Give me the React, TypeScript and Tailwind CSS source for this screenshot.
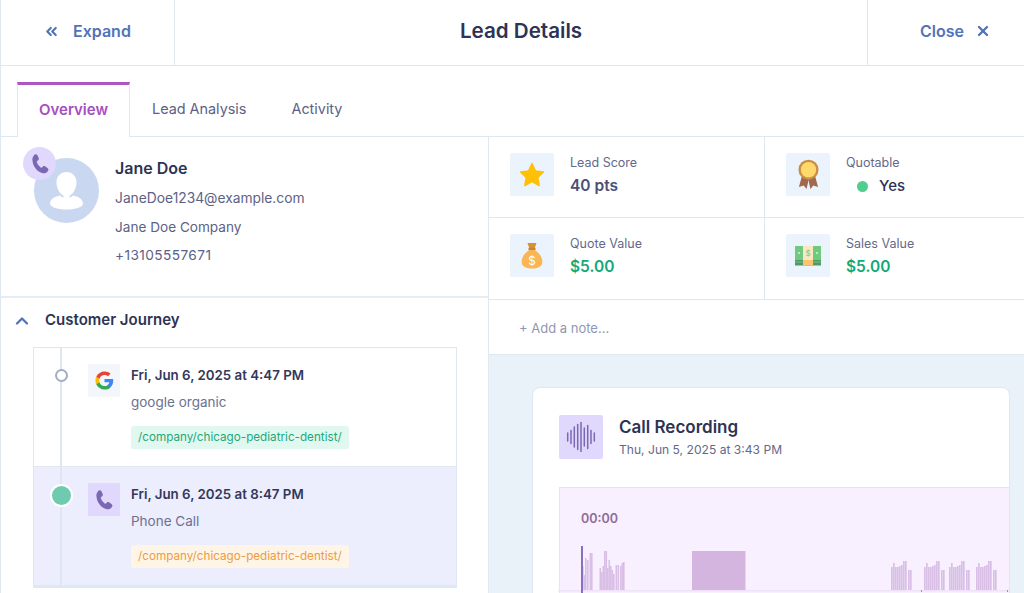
import { ChevronUp, ChevronsLeft, X } from 'lucide-react';

function PhoneIcon({ className }: { className: string }) {
  return (
    <svg viewBox="0 0 24 24" className={className} fill="#7a68b3">
      <path d="M6.2 1.6c1-.6 2.2-.3 2.8.7l1.5 3c.5 1 .3 2-.5 2.7l-1.3 1c-.3.3-.4.7-.2 1.2 1 2.500 2.300 4.200 4.300 5.600.4.300.8.200 1.200-.1l1.200-1c.8-.7 1.900-.7 2.700-.1l2.500 2c.9.7 1 2 .3 2.900l-.8.9c-1.200 1.300-3 2-4.800 1.600-6.300-1.500-10.800-7.300-11.400-14.500-.2-2 .5-3.700 1.700-4.900z" />
    </svg>
  );
}

function GoogleLogo() {
  return (
    <svg viewBox="0 0 24 24" className="w-[19px] h-[19px]">
      <path fill="#4285F4" d="M23 12.300c0-.8-.1-1.600-.2-2.300H12v4.300h6.200c-.3 1.400-1.100 2.600-2.300 3.400v2.800h3.700c2.100-2 3.400-4.900 3.400-8.200z" />
      <path fill="#34A853" d="M12 23.500c3.100 0 5.700-1 7.600-2.800l-3.700-2.800c-1 .7-2.400 1.100-3.900 1.100-3 0-5.500-2-6.400-4.700H1.700v2.900c1.900 3.800 5.800 6.300 10.300 6.300z" />
      <path fill="#FBBC05" d="M5.600 14.300c-.2-.7-.4-1.500-.4-2.300s.1-1.600.4-2.300V6.800H1.700C.9 8.400.5 10.100.5 12s.4 3.600 1.200 5.200l3.900-2.900z" />
      <path fill="#EA4335" d="M12 5c1.700 0 3.200.6 4.400 1.700l3.300-3.300C17.700 1.600 15.100.5 12 .5 7.500.5 3.600 3.100 1.700 6.800l3.900 2.900C6.500 7 9 5 12 5z" />
    </svg>
  );
}

function StarIcon() {
  return (
    <svg viewBox="0 0 26 25" className="w-[26px] h-[25px]">
      <path fill="#ffc107" stroke="#ffc107" strokeWidth="1.500" strokeLinejoin="round" d="M13 1.500l3.500 7.500 8 1-5.800 5.500 1.500 8L13 19.600 5.800 23.500l1.500-8L1.500 10l8-1z" />
    </svg>
  );
}

function RibbonIcon() {
  return (
    <svg viewBox="0 0 24 32" className="w-[23px] h-[31px]">
      <path fill="#a1674f" d="M5 18l-3 11 5-1.500L10 31l2.500-11z" />
      <path fill="#a1674f" d="M19 18l3 11-5-1.500L14 31l-2.500-11z" />
      <circle cx="12" cy="11" r="10.500" fill="#c98f45" />
      <circle cx="12" cy="11" r="8" fill="#ffd96b" />
    </svg>
  );
}

function BagIcon() {
  return (
    <svg viewBox="0 0 24 30" className="w-[22px] h-[27px]">
      <path fill="#d98f35" d="M7 1h10l-2 6h-6z" />
      <rect x="8" y="6.500" width="8" height="2.500" rx="1" fill="#c98430" />
      <path fill="#fbb654" d="M9 9h6c5 3 8.500 8 8.500 13 0 5-4 7.500-11.500 7.500S.5 27 .5 22C.5 17 4 12 9 9z" />
      <text x="12" y="25" textAnchor="middle" fontSize="13" fill="#fff" fontFamily="Inter, sans-serif">$</text>
    </svg>
  );
}

function BillsIcon() {
  return (
    <svg viewBox="0 0 26 20" className="w-[26px] h-[20px]">
      <rect x="0" y="0" width="26" height="14" fill="#6fc97f" />
      <rect x="0" y="14" width="26" height="5.500" fill="#4c9a66" />
      <rect x="0" y="15.500" width="26" height="1" fill="#7dbb8e" />
      <rect x="8" y="0" width="10" height="14" fill="#fbe7c0" />
      <rect x="8" y="14" width="10" height="5.500" fill="#fbc46d" />
      <circle cx="4" cy="7" r="1" fill="#d4f2da" />
      <circle cx="22" cy="7" r="1" fill="#d4f2da" />
      <text x="13" y="10" textAnchor="middle" fontSize="8" fill="#7cc48a" fontFamily="Inter, sans-serif">$</text>
    </svg>
  );
}

function SoundIcon() {
  // x from centre, half height
  const lines = [[-13.300, 4], [-10, 6.500], [-6.700, 10], [-3.300, 12.500], [0, 14.500], [3.300, 9], [6.700, 11.500], [10, 6.500], [13.300, 4]];
  return (
    <svg viewBox="-15 -15 30 30" className="w-[30px] h-[30px]" stroke="#7a68b3" strokeWidth="1.500" strokeLinecap="round">
      {lines.map(([x, h], i) => (
        <line key={i} x1={x} x2={x} y1={-h} y2={h} />
      ))}
    </svg>
  );
}

function Avatar() {
  return (
    <div className="relative w-[65px] h-[65px] rounded-full bg-[#c9d7f1] shrink-0">
      <svg viewBox="0 0 65 65" className="w-[65px] h-[65px]">
        <path fill="#fff" d="M32.500 14c6 0 10 4.500 10 10.500 0 5.500-3 11-6.500 13-1 .8-1 1.500 0 2-2 1-5 1-7 0 1-.5 1-1.200 0-2-3.500-2-6.500-7.500-6.500-13C22.500 18.500 26.500 14 32.500 14z" />
        <path fill="#fff" d="M26 37.500c2 3 11 3 13 0 5 .8 10 3.500 10 8 0 3.500-7 6-16.500 6S16 49 16 45.500c0-4.500 5-7.200 10-8z" />
      </svg>
      <div className="absolute -left-[11px] -top-[11px] w-[33px] h-[33px] rounded-full bg-[#e0d8fd] flex items-center justify-center">
        <PhoneIcon className="w-[22px] h-[22px]" />
      </div>
    </div>
  );
}

function Stat({ icon, label, children, border, tall }: { icon: React.ReactNode; label: string; children: React.ReactNode; border?: boolean; tall?: boolean }) {
  return (
    <div className={`${tall ? 'h-[82px]' : 'h-[81px]'} pl-[21px] pt-[16px] flex gap-[16px] border-b border-[#dfe7f1] ${border ? 'border-r' : ''}`}>
      <div className="w-[44px] h-[43px] rounded-[2px] bg-[#ebf3fd] flex items-center justify-center shrink-0">{icon}</div>
      <div className="pt-px">
        <div className="text-[12.5px] leading-[18px] text-[#64698a]">{label}</div>
        {children}
      </div>
    </div>
  );
}

function JourneyRow({ date, source, tag, tagClass, icon, iconClass, active }: { date: string; source: string; tag: string; tagClass: string; icon: React.ReactNode; iconClass: string; active?: boolean }) {
  return (
    <div className={`relative pl-[54px] pt-[16px] flex gap-[11px] border-[#dfe7f1] ${active ? 'bg-[#eceefd] h-[120px] border-b-2' : 'bg-white h-[119px] border-b'}`}>
      <div className="absolute left-[26px] top-0 bottom-0 w-[2px] bg-[#dde6f1]" />
      {active ? (
        <div className="absolute left-[16px] top-[17px] w-[23px] h-[23px] rounded-full bg-[#6fcab0] border-2 border-white" />
      ) : (
        <div className="absolute left-[21px] top-[21px] w-[13px] h-[13px] rounded-full bg-white border-2 border-[#a3adc2]" />
      )}
      <div className={`w-[32px] h-[33px] flex items-center justify-center shrink-0 ${iconClass}`}>{icon}</div>
      <div>
        <div className="text-[13.3px] leading-[22px] font-semibold text-[#33385a]">{date}</div>
        <div className="text-[13.5px] leading-[22px] mt-[5px] text-[#6c7190]">{source}</div>
        <div className={`mt-[13px] w-fit h-[23px] px-[7px] rounded-[3px] text-[11.7px] leading-[23px] ${tagClass}`}>{tag}</div>
      </div>
    </div>
  );
}

// page x, top of bar
const groupA = [[582, 566], [583.500, 575], [585, 558], [587, 560], [589.500, 553], [591, 553]];
const groupB = [[599.500, 568], [601, 572], [602.500, 566], [604, 551], [605.500, 551], [607, 568], [608.500, 560], [610, 566], [611.500, 570], [613, 574], [615.500, 565], [617.500, 565], [620, 566], [621.500, 563], [623, 562]];
const rightShape = [[0, 567], [2, 563], [4, 567], [6, 567], [8, 566], [10, 565], [12, 561], [14, 561], [17, 570], [19, 570]];
const rightGroups = [891, 924, 949, 976];

function Waveform() {
  const light = rightGroups.flatMap((g) => rightShape.map(([dx, top]) => [g + dx, top]));
  return (
    <svg viewBox="558 546 451 48" className="w-[451px] h-[48px] mt-[17px] -ml-[2px] shrink-0">
      {light.map(([x, top], i) => (
        <rect key={i} x={x} y={top} width={1.700} height={590 - top} fill="#d9bfe6" />
      ))}
      {groupA.concat(groupB).map(([x, top], i) => (
        <rect key={i} x={x} y={top} width={1.600} height={590 - top} fill="#d9bfe6" />
      ))}
      <rect x={692} y={551} width={53.500} height={39} fill="#d3b5e0" />
      <rect x={558} y={590} width={451} height={1.500} fill="#f0e2f8" />
      <rect x={921} y={590} width={1} height={2} fill="#9a8fb5" />
      <rect x={1007} y={590} width={1} height={2} fill="#9a8fb5" />
      <rect x={581} y={546} width={2} height={48} fill="#8670c4" />
    </svg>
  );
}

export default function App() {
  return (
    <div className="w-[1024px] h-[593px] overflow-hidden bg-white border-l border-[#dfe7f1] flex flex-col font-['Inter',sans-serif]">
      {/* Header */}
      <div className="h-[66px] shrink-0 flex border-b border-[#dfe7f1]">
        <div className="w-[174px] flex items-center gap-[13px] pl-[42px] pb-[3px] border-r border-[#dfe7f1] text-[#5273b8]">
          <ChevronsLeft className="w-[17px] h-[17px]" strokeWidth={3} />
          <span className="text-[16px] font-semibold">Expand</span>
        </div>
        <div className="flex-1 flex items-center justify-center pb-[3px] text-[20.600px] font-semibold text-[#2d3354]">Lead Details</div>
        <div className="w-[157px] flex items-center gap-[11px] pl-[52px] pb-[3px] border-l border-[#dfe7f1] text-[#5273b8]">
          <span className="text-[16px] font-semibold">Close</span>
          <X className="w-[16px] h-[16px]" strokeWidth={3.500} />
        </div>
      </div>

      {/* Tabs */}
      <div className="h-[71px] shrink-0 flex items-end pl-[16px] border-b border-[#dfe7f1]">
        <div className="w-[113px] h-[55px] -mb-px bg-white border-t-[3px] border-x border-t-[#ac55c3] border-x-[#dfe7f1] flex items-center justify-center pb-[2px] text-[15px] font-semibold text-[#a64fc0]">Overview</div>
        <div className="h-[54px] flex items-center gap-[45px] pl-[22px] text-[14.400px] text-[#5c6285]">
          <span>Lead Analysis</span>
          <span>Activity</span>
        </div>
      </div>

      <div className="flex-1 flex min-h-0">
        {/* Left column */}
        <div className="w-[488px] shrink-0 border-r border-[#dfe7f1]">
          <div className="h-[161px] pl-[33px] pt-[21px] flex gap-[16px] border-b-2 border-[#e6ecf4]">
            <Avatar />
            <div className="-mt-[2px]">
              <div className="text-[16px] leading-[24px] font-semibold text-[#2d3354]">Jane Doe</div>
              <div className="text-[13.800px] leading-[28.500px] text-[#5c6285] mt-[4px]">JaneDoe1234@example.com</div>
              <div className="text-[13.600px] leading-[28.500px] text-[#5c6285]">Jane Doe Company</div>
              <div className="text-[13.700px] leading-[28.500px] tracking-[0.4px] text-[#5c6285]">+13105557671</div>
            </div>
          </div>
          <div className="h-[49px] flex items-center gap-[13px] pl-[11px] pb-[4px] text-[15px] font-semibold text-[#2d3354]">
            <ChevronUp className="w-[20px] h-[20px] text-[#5273b8]" strokeWidth={2.800} />
            <span>Customer Journey</span>
          </div>
          <div className="ml-[32px] w-[424px] border border-[#dfe7f1]">
            <JourneyRow
              date="Fri, Jun 6, 2025 at 4:47 PM"
              source="google organic"
              tag="/company/chicago-pediatric-dentist/"
              tagClass="bg-[#e1f8f1] text-[#1fa878]"
              icon={<GoogleLogo />}
              iconClass="bg-[#f3f6fa]"
            />
            <JourneyRow
              date="Fri, Jun 6, 2025 at 8:47 PM"
              source="Phone Call"
              tag="/company/chicago-pediatric-dentist/"
              tagClass="bg-[#fff5e6] text-[#ec9b46]"
              icon={<PhoneIcon className="w-[22px] h-[22px]" />}
              iconClass="bg-[#e0d8fd]"
              active
            />
          </div>
        </div>

        {/* Right column */}
        <div className="flex-1 flex flex-col min-w-0">
          <div className="grid grid-cols-[276px_1fr]">
            <Stat icon={<StarIcon />} label="Lead Score" border>
              <div className="text-[15.500px] leading-[28px] font-semibold text-[#4a5078]">40 pts</div>
            </Stat>
            <Stat icon={<RibbonIcon />} label="Quotable">
              <div className="flex items-center gap-[11px] pl-[11px] text-[15px] leading-[28px] font-medium text-[#2d3354]">
                <span className="w-[11px] h-[11px] rounded-full bg-[#4fce90]" />
                Yes
              </div>
            </Stat>
            <Stat icon={<BagIcon />} label="Quote Value" border tall>
              <div className="text-[15.500px] leading-[28px] font-semibold text-[#14a878]">$5.00</div>
            </Stat>
            <Stat icon={<BillsIcon />} label="Sales Value" tall>
              <div className="text-[15.500px] leading-[28px] font-semibold text-[#14a878]">$5.00</div>
            </Stat>
          </div>
          <div className="h-[55px] shrink-0 flex items-center pl-[30px] pt-[3px] text-[13px] text-[#8f97b3] border-b border-[#dfe7f1]">+ Add a note...</div>

          <div className="flex-1 min-h-0 bg-[#e9f1f9] pl-[43px] pr-[14px] pt-[32px]">
            <div className="h-[300px] bg-white rounded-t-lg border border-[#dfe8f2] pt-[27px] pl-[26px]">
              <div className="flex gap-[16px]">
                <div className="w-[44px] h-[44px] rounded-[2px] bg-[#e0d8fd] flex items-center justify-center">
                  <SoundIcon />
                </div>
                <div>
                  <div className="text-[17px] leading-[24px] font-semibold text-[#2d3354]">Call Recording</div>
                  <div className="text-[12.100px] leading-[22px] text-[#64698a]">Thu, Jun 5, 2025 at 3:43 PM</div>
                </div>
              </div>
              <div className="mt-[26px] bg-[#f8f0fe] border-t border-l border-[#dfe7f1] pt-[21px] flex flex-col">
                <div className="pl-[21px] text-[12.500px] leading-[20px] font-semibold text-[#8e6c9a]">00:00</div>
                <Waveform />
              </div>
            </div>
          </div>
        </div>
      </div>
    </div>
  );
}
